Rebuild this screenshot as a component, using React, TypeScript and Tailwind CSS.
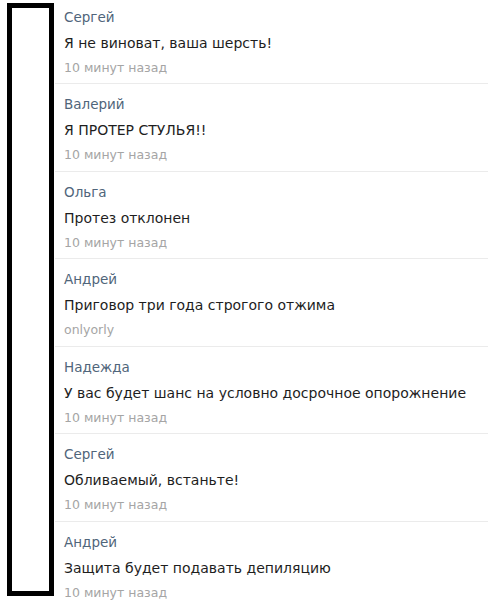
import React from 'react';

interface Comment {
  name: string;
  text: string;
  meta: string;
}

const comments: Comment[] = [
  { name: 'Сергей', text: 'Я не виноват, ваша шерсть!', meta: '10 минут назад' },
  { name: 'Валерий', text: 'Я ПРОТЕР СТУЛЬЯ!!', meta: '10 минут назад' },
  { name: 'Ольга', text: 'Протез отклонен', meta: '10 минут назад' },
  { name: 'Андрей', text: 'Приговор три года строгого отжима', meta: 'onlyorly' },
  { name: 'Надежда', text: 'У вас будет шанс на условно досрочное опорожнение', meta: '10 минут назад' },
  { name: 'Сергей', text: 'Обливаемый, встаньте!', meta: '10 минут назад' },
  { name: 'Андрей', text: 'Защита будет подавать депиляцию', meta: '10 минут назад' },
];

function CommentRow({ comment, last }: { comment: Comment; last: boolean }) {
  return (
    <div className={`h-[87.5px] pt-[10px] pl-[9px] ${last ? '' : 'border-b border-[#ebebeb]'}`}>
      <div className="text-[13.5px] leading-[20px] text-[#50657a]">{comment.name}</div>
      <div className="mt-[6px] text-[14px] leading-[20px] text-[#1e1e1e]">{comment.text}</div>
      <div className="mt-[5px] text-[12.5px] leading-[20px] text-[#a5a5a5]">{comment.meta}</div>
    </div>
  );
}

export default function App() {
  return (
    <div className="flex w-[495px] h-[604px] overflow-hidden bg-white font-['DejaVu_Sans',sans-serif]">
      <div className="shrink-0 w-[47px] ml-[7px] mt-[3px] mb-[8px] border-[5px] border-black" />
      <div className="flex-1 ml-px mr-[7px] -mt-[3.5px]">
        {comments.map((c, i) => (
          <CommentRow key={i} comment={c} last={i === comments.length - 1} />
        ))}
      </div>
    </div>
  );
}
